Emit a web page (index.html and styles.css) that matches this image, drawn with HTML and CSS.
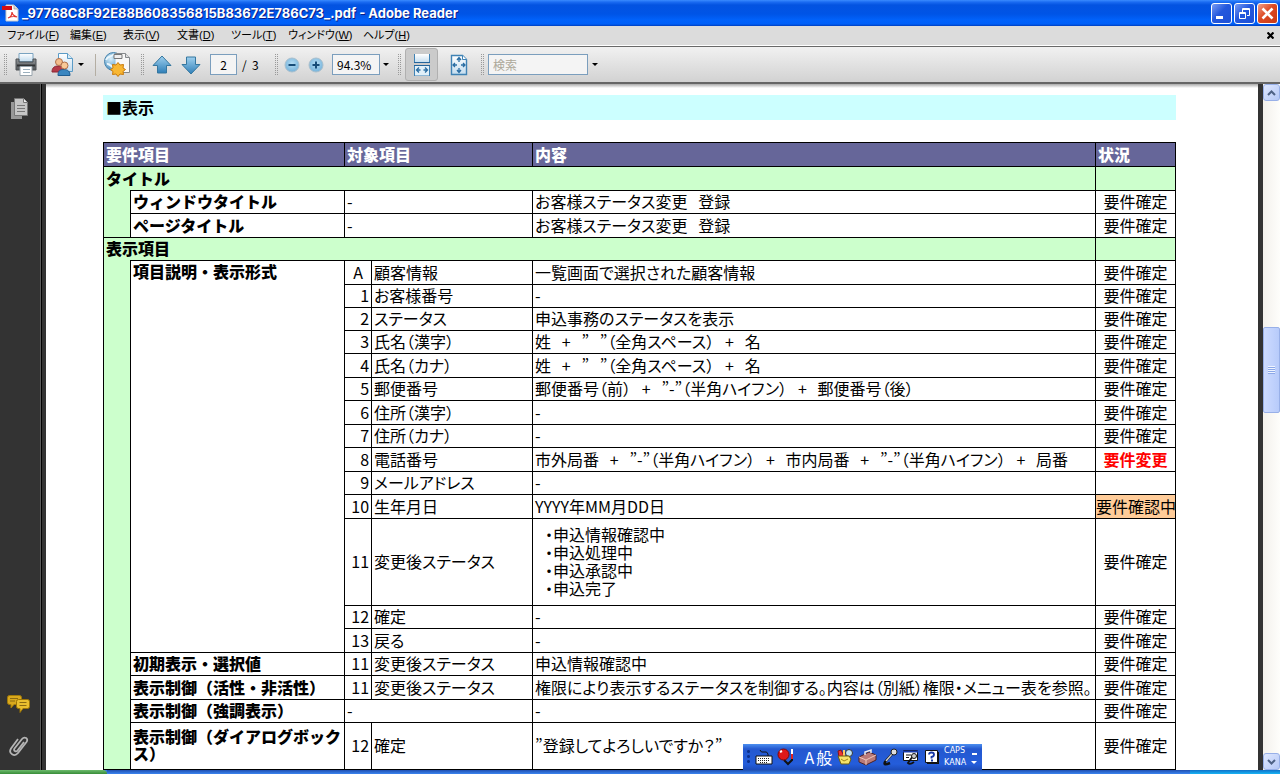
FILE: index.html
```html
<!DOCTYPE html>
<html lang="ja">
<head>
<meta charset="utf-8">
<title>_97768C8F92E88B608356815B83672E786C73_.pdf - Adobe Reader</title>
<link rel="stylesheet" href="styles.css">
</head>
<body>
<svg class="defs" aria-hidden="true">
  <defs>
    <linearGradient id="blue" x1="0" y1="0" x2="0" y2="1"><stop offset="0" stop-color="#9fd0ee"/><stop offset="1" stop-color="#2f7fb8"/></linearGradient>
    <linearGradient id="page" x1="0" y1="0" x2="0" y2="1"><stop offset="0" stop-color="#ffffff"/><stop offset="1" stop-color="#c3dcee"/></linearGradient>
    <linearGradient id="grey" x1="0" y1="0" x2="0" y2="1"><stop offset="0" stop-color="#8d9194"/><stop offset="1" stop-color="#55595c"/></linearGradient>
    <radialGradient id="globe" cx=".35" cy=".35" r=".7"><stop offset="0" stop-color="#d8effb"/><stop offset="1" stop-color="#3c86ba"/></radialGradient>
    <radialGradient id="knob" cx=".5" cy=".4" r=".6"><stop offset="0" stop-color="#b5ddf4"/><stop offset="1" stop-color="#74b2da"/></radialGradient>
  </defs>
</svg>
<div class="app">
  <header class="titlebar">
    <svg class="app-icon" width="17" height="18" viewBox="0 0 17 18"><path d="M4 1h8l4 4v12H4z" fill="#fff" stroke="#c9c9c9"/><path d="M12 1v4h4" fill="#ddd" stroke="#999" stroke-width=".7"/><path d="M0 2h10v4H0z" fill="#d40d12"/><path d="M6 14c3-1 4-4 4-6 0 3 2 4 5 5-3-1-6-.5-9 1z" fill="none" stroke="#e0322c" stroke-width="1.2"/></svg>
    <h1 class="title">_97768C8F92E88B608356815B83672E786C73_.pdf - Adobe Reader</h1>
    <div class="window-buttons">
      <button class="winbtn" aria-label="最小化"><svg width="19" height="19"><path d="M4 12h7v3H4z" fill="#fff"/></svg></button>
      <button class="winbtn" aria-label="元に戻す"><svg width="19" height="19" fill="none" stroke="#fff"><path d="M7.500 8V4.500h7v7H12M4.500 8.500h6v6h-6z"/><path d="M7 5.500h8M4 9.500h7"/></svg></button>
      <button class="winbtn winbtn-close" aria-label="閉じる"><svg width="19" height="19"><path d="M4.500 4.500l10 10M14.500 4.500l-10 10" stroke="#fff" stroke-width="2.600"/></svg></button>
    </div>
  </header>
  <nav class="menubar">
    <button>ファイル(<u>F</u>)</button><button>編集(<u>E</u>)</button><button>表示(<u>V</u>)</button><button>文書(<u>D</u>)</button><button>ツール(<u>T</u>)</button><button>ウィンドウ(<u>W</u>)</button><button>ヘルプ(<u>H</u>)</button>
    <button class="doc-close" aria-label="文書を閉じる"><svg width="7" height="7"><path d="M.5 .5l6 6M6.500 .5l-6 6" stroke="#000" stroke-width="2.200"/></svg></button>
  </nav>
  <div class="toolbar">
    <span class="grip"></span>
    <button class="tool tool-print" aria-label="印刷"><svg width="24" height="25" viewBox="0 0 24 25"><path d="M4 1.500h14v8H4z" fill="url(#page)" stroke="#7aa3c0"/><path d="M1 7h3v3h14V7h3v11H1z" fill="url(#grey)" stroke="#4d5154"/><path d="M2 13.500h18" stroke="#303335" stroke-width="2"/><path d="M5 14.500h12v9H5z" fill="#fff" stroke="#98a4ad"/><path d="M8 17.500h7M8 20.500h7" stroke="#9bb0be"/></svg></button>
    <button class="tool tool-share" aria-label="共同作業"><svg width="25" height="25" viewBox="0 0 25 25"><path d="M7.500 1.500h9l5 5v13h-14z" fill="url(#page)" stroke="#5b9bc6"/><path d="M16.500 1.500v5h5" fill="#d6eaf6" stroke="#5b9bc6"/><path d="M1 20c0-4 2-6 6-6s6 2 6 6z" fill="#b53a48" stroke="#8b2532"/><circle cx="8" cy="10" r="3.500" fill="#f3bd8c" stroke="#b0704a"/><path d="M7 23.500c0-5 2-6 6-6s6 2 6 6z" fill="#3a86c0" stroke="#1f5d91"/><circle cx="13.500" cy="13.500" r="3.500" fill="#f8c997" stroke="#b0704a"/></svg><span class="caret"></span></button>
    <span class="rule"></span>
    <button class="tool tool-web" aria-label="Web"><svg width="27" height="26" viewBox="0 0 27 26"><circle cx="9.500" cy="9.500" r="9" fill="url(#globe)" stroke="#4683ad"/><path d="M2 8c2-5 5-2 8-6M3 12c3-1 4 3 7 4" stroke="#eaf6fc" stroke-width="2" fill="none"/><path d="M11.500 3.500V1.500h10l4 4v15h-14" fill="#f8f8f8" stroke="#85898c"/><path d="M10 2.500h8v4h-8z" fill="#eee" stroke="#777"/><path d="M21.500 1.500v4h4" fill="#ddd" stroke="#85898c"/><path d="M14 10.500l2 2.500 3.500-.5-.5 3.500 2.500 1.500-2.500 2 .5 3-3.500-.5-2 2.500-2-2.500-3.500.5.500-3-2.500-2 2.500-1.500-.5-3.500 3.500.5z" fill="#f8b733" stroke="#c87a0a"/></svg></button>
    <span class="grip"></span>
    <button class="tool tool-arrow" aria-label="前ページ"><svg width="20" height="20" viewBox="0 0 20 20"><path d="M10 1l9 9.500h-4.500V18h-9v-7.500H1z" fill="url(#blue)" stroke="#35779f"/></svg></button>
    <button class="tool tool-arrow" aria-label="次ページ"><svg width="20" height="20" viewBox="0 0 20 20"><path d="M10 19L1 9.500h4.500V2h9v7.500H19z" fill="url(#blue)" stroke="#35779f"/></svg></button>
    <div class="page-nav"><input class="field" aria-label="ページ" value="2"><span>/&nbsp; 3</span></div>
    <div class="tool-group">
      <span class="grip"></span>
      <button class="tool" aria-label="縮小"><svg width="16" height="16" viewBox="0 0 16 16"><circle cx="8" cy="8" r="7" fill="url(#knob)" stroke="#a9bfcd"/><path d="M4.500 8h7" stroke="#164c78" stroke-width="2"/></svg></button>
    </div>
    <button class="tool" aria-label="拡大"><svg width="16" height="16" viewBox="0 0 16 16"><circle cx="8" cy="8" r="7" fill="url(#knob)" stroke="#a9bfcd"/><path d="M4.500 8h7M8 4.500v7" stroke="#164c78" stroke-width="2"/></svg></button>
    <div class="zoom-box"><input class="field" aria-label="倍率" value="94.3%"><button class="tool" aria-label="倍率を選択"><span class="caret"></span></button></div>
    <div class="tool-group tool-group-tight">
      <span class="grip"></span>
      <button class="tool tool-active" aria-label="幅に合わせる"><svg width="18" height="22" viewBox="0 0 18 22"><path d="M1.500 0v8.500h15V0" fill="url(#page)" stroke="#3f82b4"/><path d="M1.500 22V11.500h15V22z" fill="#e1f0f9" stroke="#3f82b4"/><path d="M1 11.500h16M1 8.500h16" stroke="#23649b"/><path d="M3.500 16h4M10.500 16h4M6 13.500L3.500 16 6 18.500M12 13.500l2.500 2.500-2.500 2.500" fill="none" stroke="#2a6da3" stroke-width="1.300"/></svg></button>
    </div>
    <button class="tool tool-fit" aria-label="ページ全体"><svg width="18" height="22" viewBox="0 0 18 22"><path d="M1.500 1.500h11l4 4v15h-15z" fill="url(#page)" stroke="#3f82b4" stroke-width="1.400"/><path d="M12.500 1.500v4h4" fill="#fff" stroke="#3f82b4"/><path d="M9 8V4M9 14v4M7 11H3M11 11h4M7 6l2-2.500L11 6M7 16l2 2.500 2-2.500M5 9l-2 2 2 2M13 9l2 2-2 2" fill="none" stroke="#2a6da3" stroke-width="1.300"/></svg></button>
    <div class="tool-group tool-group-tight search">
      <span class="grip"></span>
      <input class="field" aria-label="検索" placeholder="検索"><button class="tool" aria-label="検索オプション"><span class="caret"></span></button>
    </div>
  </div>
  <div class="workspace">
    <aside class="side">
      <button class="tool" aria-label="ページ"><svg width="19" height="22" viewBox="0 0 19 22"><path d="M1 4h11v17H1z" fill="#989898"/><path d="M4.500.5h9l4 4v13h-13z" fill="#c6c6c6" stroke="#777"/><path d="M13.500.5v4h4" fill="#eee" stroke="#777"/><path d="M7 7.500h8M7 10.500h8M7 13.500h8" stroke="#777"/></svg></button>
      <div class="side-bottom">
        <button class="tool" aria-label="注釈"><svg width="24" height="19" viewBox="0 0 24 19"><path d="M2.500.5h10q2 0 2 2v5q0 2-2 2H7L4 13V9.500H2.500q-2 0-2-2v-5q0-2 2-2z" fill="#d9a91d" stroke="#a27a08"/><path d="M11.500 4.500h9q2 0 2 2v5q0 2-2 2h-4.500L13 17.500v-4h-1.500q-2 0-2-2v-5q0-2 2-2z" fill="#e9bf2f" stroke="#9b7407"/><path d="M3 3.500h8M3 6h5M12.500 7.500h7M12.500 10.500h7" stroke="#8a6a12"/></svg></button>
        <button class="tool" aria-label="添付ファイル"><svg width="22" height="24" viewBox="0 0 22 24"><path d="M16 8L9.500 16.500c-1.500 2-4.500 0-3-2L14 5c2.500-3 7-.5 4.500 3L10 19c-3.500 4.500-10 .5-7-4.500L10 5" fill="none" stroke="#b5b5b5" stroke-width="1.800"/></svg></button>
      </div>
    </aside>
    <main class="doc">
      <h2 class="section">■表示</h2>
      <table class="spec">
        <colgroup><col class="c-indent"><col class="c-item"><col class="c-no"><col class="c-target"><col><col class="c-state"></colgroup>
        <thead><tr class="odd"><th colspan="2">要件項目</th><th colspan="2">対象項目</th><th>内容</th><th>状況</th></tr></thead>
        <tbody>
          <tr class="odd group"><th colspan="5">タイトル</th><td></td></tr>
          <tr><td class="indent" rowspan="2"></td><th>ウィンドウタイトル</th><td colspan="2">-</td><td>お客様ステータス変更   登録</td><td class="state">要件確定</td></tr>
          <tr class="odd"><th>ページタイトル</th><td colspan="2">-</td><td>お客様ステータス変更   登録</td><td class="state">要件確定</td></tr>
        </tbody>
        <tbody>
          <tr class="group"><th colspan="5">表示項目</th><td></td></tr>
          <tr class="odd"><td class="indent" rowspan="18"></td><th class="top" rowspan="14">項目説明・表示形式</th><td class="letter">A</td><td>顧客情報</td><td>一覧画面で選択された顧客情報</td><td class="state">要件確定</td></tr>
          <tr><td class="no">1</td><td>お客様番号</td><td>-</td><td class="state">要件確定</td></tr>
          <tr><td class="no">2</td><td>ステータス</td><td>申込事務のステータスを表示</td><td class="state">要件確定</td></tr>
          <tr><td class="no">3</td><td>氏名（漢字）</td><td>姓   +   ”   ”（全角スペース）   +   名</td><td class="state">要件確定</td></tr>
          <tr class="odd"><td class="no">4</td><td>氏名（カナ）</td><td>姓   +   ”   ”（全角スペース）   +   名</td><td class="state">要件確定</td></tr>
          <tr><td class="no">5</td><td>郵便番号</td><td>郵便番号（前）   +   ”-”（半角ハイフン）   +   郵便番号（後）</td><td class="state">要件確定</td></tr>
          <tr class="odd"><td class="no">6</td><td>住所（漢字）</td><td>-</td><td class="state">要件確定</td></tr>
          <tr><td class="no">7</td><td>住所（カナ）</td><td>-</td><td class="state">要件確定</td></tr>
          <tr class="odd"><td class="no">8</td><td>電話番号</td><td>市外局番   +   ”-”（半角ハイフン）   +   市内局番   +   ”-”（半角ハイフン）   +   局番</td><td class="state changed">要件変更</td></tr>
          <tr><td class="no">9</td><td>メールアドレス</td><td>-</td><td></td></tr>
          <tr class="odd"><td class="no">10</td><td>生年月日</td><td>YYYY年MM月DD日</td><td class="state checking">要件確認中</td></tr>
          <tr class="list-row"><td class="no">11</td><td>変更後ステータス</td><td><ul><li>・申込情報確認中</li><li>・申込処理中</li><li>・申込承認中</li><li>・申込完了</li></ul></td><td class="state">要件確定</td></tr>
          <tr><td class="no">12</td><td>確定</td><td>-</td><td class="state">要件確定</td></tr>
          <tr class="odd"><td class="no">13</td><td>戻る</td><td>-</td><td class="state">要件確定</td></tr>
          <tr><th>初期表示・選択値</th><td class="no">11</td><td>変更後ステータス</td><td>申込情報確認中</td><td class="state">要件確定</td></tr>
          <tr class="odd"><th>表示制御（活性・非活性）</th><td class="no">11</td><td>変更後ステータス</td><td>権限により表示するステータスを制御する。内容は（別紙）権限・メニュー表を参照。</td><td class="state">要件確定</td></tr>
          <tr><th>表示制御（強調表示）</th><td colspan="2">-</td><td>-</td><td class="state">要件確定</td></tr>
          <tr class="double"><th>表示制御（ダイアログボックス）</th><td class="no">12</td><td>確定</td><td>”登録してよろしいですか？”</td><td class="state">要件確定</td></tr>
        </tbody>
      </table>
    </main>
    <div class="scroll">
      <button class="scroll-btn" aria-label="上へ"><svg width="9" height="6"><path d="M1 5l3.500-3.500L8 5" fill="none" stroke="#4d6185" stroke-width="2"/></svg></button>
      <span class="track-above"></span>
      <div class="thumb"></div>
      <span class="track-below"></span>
      <button class="scroll-btn" aria-label="下へ"><svg width="9" height="6"><path d="M1 1l3.500 3.500L8 1" fill="none" stroke="#4d6185" stroke-width="2"/></svg></button>
    </div>
    <div class="ime">
      <span class="ime-grip"></span>
      <svg width="18" height="16" viewBox="0 0 18 16"><path d="M5 1q1 3 4 2t4 2v2" fill="none" stroke="#111"/><path d="M1 7h16v8H1z" fill="#fff" stroke="#111"/><path d="M3 9.500h12M3 11.500h12M5 13.500h8" stroke="#222" stroke-dasharray="1 1"/></svg>
      <svg width="18" height="18" viewBox="0 0 18 18"><path d="M7 12l4 4 4-4V8" fill="none" stroke="#111" stroke-width="2"/><circle cx="6.500" cy="6.500" r="5.500" fill="#e01818" stroke="#7e0808"/><path d="M3 4l2-1" stroke="#fff" stroke-width="2"/><path d="M15 1v7" stroke="#fff" stroke-width="2"/><path d="M15 6v5" stroke="#d22" stroke-width="2"/></svg>
      <span class="ime-mode"><span>A</span><span>般</span></span>
      <svg width="18" height="18" viewBox="0 0 18 18"><path d="M3 9l-1-6 3-1 3 6" fill="#e33" stroke="#811"/><path d="M7 8V2h2v6" fill="#fc6"/><circle cx="13" cy="5" r="3.500" fill="#bde2f5" stroke="#333"/><path d="M2 8h11l2 3-2 5H5z" fill="#f6e36a" stroke="#6c5a10"/><path d="M5 11l3 2 4-2" stroke="#a48315" fill="none"/></svg>
      <svg width="19" height="18" viewBox="0 0 19 18"><path d="M1 9l10-5 7 3v5L8 17l-7-3z" fill="#b97a78" stroke="#4c2225"/><path d="M1 9l7 3 10-5M8 12v5" fill="none" stroke="#efc6b8"/><path d="M7 7V4l6-2v3" fill="none" stroke="#eee" stroke-width="1.500"/></svg>
      <svg width="18" height="18" viewBox="0 0 18 18"><path d="M11 6L4 14q-2 4 5 1" fill="none" stroke="#111" stroke-width="2.500"/><path d="M11 6l-6 7" stroke="#ccc" stroke-width="1.500"/><circle cx="13" cy="4" r="3" fill="#ddd" stroke="#222"/></svg>
      <svg width="18" height="18" viewBox="0 0 18 18"><path d="M1.500 2.500h14v10h-14z" fill="#fff" stroke="#111"/><path d="M1 3.500h15" stroke="#1638a8" stroke-width="2"/><path d="M4 7h5M4 9.500h3" stroke="#111"/><path d="M11 8l-5 7q2 2 6-1" fill="none" stroke="#111" stroke-width="1.800"/><circle cx="12" cy="8" r="2.500" fill="#ccc" stroke="#111"/></svg>
      <svg width="16" height="18" viewBox="0 0 16 18"><path d="M3 4h12v12H3z" fill="#111"/><path d="M1.500 2.500h12v12h-12z" fill="#fff" stroke="#111"/><path d="M5 6.500q0-2 2.500-2t2.500 2-2.500 2.500v1.500" fill="none" stroke="#1638a8" stroke-width="1.800"/><path d="M7 11.500h2v2H7z" fill="#1638a8"/></svg>
      <span class="ime-locks"><span>CAPS</span><span>KANA</span></span>
      <svg width="8" height="18"><path d="M2 5h5v2H2zM1 13h6l-3 3z" fill="#fff"/></svg>
    </div>
  </div>
  <footer class="taskbar"><span class="start"></span><span class="tasks"></span><span class="tray"></span></footer>
</div>
</body>
</html>
```
FILE: styles.css
```css
* { box-sizing: border-box; }
body { margin: 0; font-family: "Liberation Sans", "Noto Sans CJK JP", sans-serif; color: #000; }
button { border: 0; padding: 0; margin: 0; background: none; font: inherit; color: inherit; }
svg { display: block; flex: none; }
.defs { position: absolute; width: 0; height: 0; }
.app { height: 100vh; display: flex; flex-direction: column; overflow: hidden; }

.titlebar { flex: none; height: 26px; display: flex; align-items: center; padding: 0 2px; background: linear-gradient(#3a8bff 0, #1b6cf2 2px, #0353e1 5px, #0054e6 14px, #0162fb 20px, #0060f8 24px, #003fbe 26px); }
.app-icon { margin-right: 3px; }
.title { flex: 1; margin: 0; font: bold 13px/16px Inter, sans-serif; color: #fff; text-shadow: 1px 1px #0a1d86; white-space: nowrap; }
.window-buttons { display: flex; gap: 2px; }
.winbtn { width: 21px; height: 21px; border: 1px solid #fff; border-radius: 3px; background: linear-gradient(135deg, #7a9cf4, #2458dd 45%, #1d50d6); }
.winbtn-close { background: linear-gradient(135deg, #f0a08a, #dd4a24 45%, #c83a14); }

.menubar { flex: none; height: 21px; display: grid; grid-template-columns: 63px 53px 54px 54px 57px 75px 60px 1fr; align-items: center; padding: 0 6px 2px 7px; background: #dcdcdc; border-bottom: 1px solid #696969; font: 11px/18px "Liberation Sans", "Noto Sans CJK JP", sans-serif; font-feature-settings: "palt"; box-shadow: inset 0 -1px #fff; }
.menubar button { text-align: left; white-space: nowrap; }
.menubar .doc-close { justify-self: end; }

.toolbar { flex: none; height: 37px; display: flex; align-items: center; gap: 8px; padding: 0 3px; background: linear-gradient(#f1f1f1, #d2d2d2); border-bottom: 2px solid #666; font: 12px/16px "Noto Sans CJK JP", sans-serif; }
.grip { flex: none; width: 4px; height: 22px; background: repeating-conic-gradient(#999 0 25%, transparent 0 100%) 0 0 / 2px 2px; }
.tool { flex: none; display: flex; align-items: center; }
.tool-print { width: 28px; }
.tool-share { width: 36px; gap: 2px; }
.tool-web { width: 28px; }
.tool-arrow { width: 21px; }
.rule { width: 1px; height: 22px; background: #b4aea3; }
.caret { border: 3px solid transparent; border-top-color: #000; border-bottom: 0; }
.field { width: 100%; min-width: 0; height: 21px; border: 1px solid #7b9ebd; padding: 0 4px; background: #f4f4f4; font: inherit; color: #000; }
.field::placeholder { color: #aca899; opacity: 1; }
.page-nav { display: flex; align-items: center; gap: 5px; width: 56px; white-space: nowrap; }
.page-nav .field { width: 27px; flex: none; text-align: center; }
.zoom-box { display: flex; gap: 3px; width: 57px; }
.tool-group { display: flex; align-items: center; gap: 6px; }
.tool-group-tight { gap: 4px; }
.tool-active { width: 33px; height: 33px; justify-content: center; border: 1px solid #b0b0b0; border-radius: 3px; background: #cbcbcb; }
.tool-fit { width: 26px; justify-content: center; }
.search .field { width: 100px; }

.workspace { position: relative; flex: 1; min-height: 0; display: flex; background: #fff; overflow: hidden; }
.side { flex: none; width: 46px; display: flex; flex-direction: column; justify-content: space-between; padding: 14px 0 12px; background: linear-gradient(90deg, #333 40px, #5c5c5c 40px 41px, #000 41px 42px, #333 42px); }
.side .tool { width: 38px; justify-content: center; }
.side-bottom { display: flex; flex-direction: column; gap: 20px; }
.doc { flex: 1; min-width: 0; padding: 11px 82px 0 57px; background: linear-gradient(#aaa, #fff 4px); overflow: hidden; }
.section { margin: 0 0 22px; height: 25px; padding: 0 3px; background: #ccffff; font: bold 16px/25px "Noto Sans CJK JP", sans-serif; }

.spec { width: 100%; table-layout: fixed; border-collapse: separate; border-spacing: 0; border: 0 solid #000; border-width: 0 1px 1px 0; font: 16px/18px "Noto Sans CJK JP", sans-serif; font-feature-settings: "palt"; }
.c-indent, .c-no { width: 27px; }
.c-item { width: 214px; }
.c-target { width: 161px; }
.c-state { width: 80px; }
.spec tr { height: 23px; }
.spec tr.odd { height: 24px; }
.spec tr.list-row { height: 87px; }
.spec tr.double { height: 47px; }
.spec th, .spec td { padding: 0 2px 2px; border: 0 solid #000; border-width: 1px 0 0 1px; text-align: left; white-space: pre; }
.spec th { font-weight: 900; font-feature-settings: normal; }
.spec thead th { background: #666699; color: #fff; }
.spec .group th, .spec .group td, .spec .indent { background: #ccffcc; }
.spec .indent { border-top: 0; }
.spec .top { vertical-align: top; padding-top: 1px; }
.spec .no { text-align: right; }
.spec .letter, .spec .state { text-align: center; padding: 0 0 2px; }
.spec .changed { color: #f00; font-weight: bold; }
.spec .checking { background: #ffcc99; }
.spec .double th { white-space: normal; line-height: 17px; }
.spec ul { margin: 0; padding: 0 0 0 10px; list-style: none; }

.scroll { flex: none; width: 22px; display: flex; flex-direction: column; border-left: 5px solid #333; background: linear-gradient(90deg, #f3f1ec, #fefefb); }
.scroll-btn { flex: none; height: 17px; display: flex; align-items: center; justify-content: center; border: 1px solid #98b0e8; border-radius: 3px; background: linear-gradient(135deg, #dfe8ff, #b5c8f6); }
.track-above { flex: 2; }
.track-below { flex: 3; }
.thumb { height: 86px; border: 1px solid #98b0e8; border-radius: 2px; background: repeating-linear-gradient(#eef4ff 0 1px, #8ca8e8 1px 2px) center / 7px 8px no-repeat, linear-gradient(90deg, #cddbff, #b7cbfa); }

.ime { position: absolute; right: 298px; bottom: 0; width: 239px; height: 26px; display: flex; align-items: center; justify-content: space-between; padding: 0 4px 0 3px; background: linear-gradient(#4c8ff0, #2458cf 5px, #245ddb 20px, #1c4bb8); color: #fff; }
.ime-grip { width: 5px; height: 16px; background: radial-gradient(circle, #0b2f8c 1px, transparent 2px) 0 0 / 5px 5px; }
.ime-mode { display: flex; gap: 2px; padding-left: 6px; font: 16px/18px "Noto Sans CJK JP", sans-serif; }
.ime-locks { display: flex; flex-direction: column; font: 8px/12px "DejaVu Sans", sans-serif; }

.taskbar { flex: none; height: 4px; display: flex; background: #2f73e4; }
.start { width: 107px; background: linear-gradient(#6dbb6d, #378c37); border-radius: 0 4px 0 0; }
.tasks { flex: 1; background: linear-gradient(#1f4fb0, #3b84f0); }
.tray { width: 90px; background: linear-gradient(#0f70c8, #18b4f4); }
```
